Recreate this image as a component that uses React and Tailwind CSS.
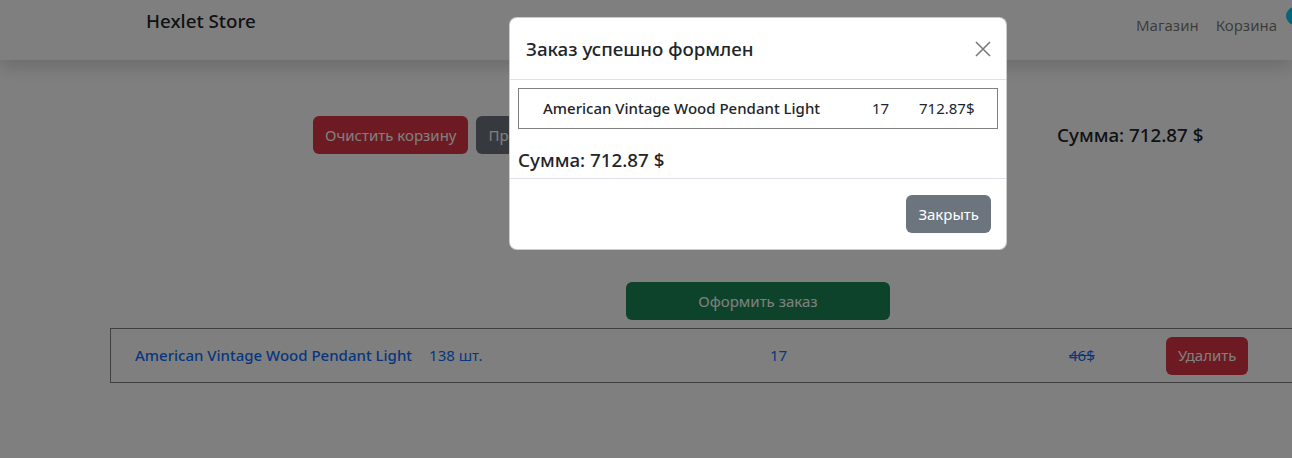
import React from "react";

// Cart page with the order-confirmation modal open over it
const item = { name: "American Vintage Wood Pendant Light", stock: 138, count: 17, price: 46, total: "712.87" };

const CloseIcon = () => (
    <svg width="16" height="16" viewBox="0 0 16 16" fill="none">
        <path d="M1 1L15 15M15 1L1 15" stroke="#7a7a7a" strokeWidth="1.6" />
    </svg>
);

const App = () => {
    return (
        <div className="relative h-[458px] w-[1292px] overflow-hidden bg-white font-['Noto_Sans',sans-serif] text-[15px] text-[#212529]">
            {/* Navbar */}
            <header className="relative z-10 flex h-[60px] items-start justify-between bg-white pl-[146px] pr-[15px] shadow-[0_8px_16px_rgba(0,0,0,0.15)]">
                <a className="mt-[6px] text-[18.75px] font-medium leading-[30px]">Hexlet Store</a>
                <nav className="mt-[13px] flex gap-[17px] leading-6 text-black/55">
                    <a>Магазин</a>
                    <a className="relative">
                        Корзина
                        <span className="absolute left-[calc(100%+9px)] top-[-6px] flex h-[18px] w-5 items-center justify-center rounded-full bg-[#0dcaf0] text-[11px] font-bold text-white">
                            1
                        </span>
                    </a>
                </nav>
            </header>

            <main>
                <div className="flex items-center pt-[56px]">
                    <div className="flex w-[1057px] gap-2 pl-[313px]">
                        <button className="h-[38px] rounded-md bg-[#dc3545] px-3 text-white">Очистить корзину</button>
                        <button className="h-[38px] rounded-md bg-[#6c757d] px-3 text-white">Продолжить покупки</button>
                    </div>
                    <div className="text-[18.75px] font-medium leading-[30px]">Сумма: {item.total} $</div>
                </div>

                <div className="mt-[128px] pl-[626px]">
                    <button className="h-[38px] w-[264px] rounded-md bg-[#198754] text-white">Оформить заказ</button>
                </div>

                <div className="ml-[110px] mt-2 flex h-[55px] w-[1220px] items-center border border-[#808080] pl-6 text-[#0d6efd]">
                    <div className="flex w-[635px] gap-[17px]">
                        <a className="font-medium">{item.name}</a>
                        <span>{item.stock} шт.</span>
                    </div>
                    <span className="w-[299px]">{item.count}</span>
                    <span className="w-[97px] line-through">{item.price}$</span>
                    <button className="h-[38px] rounded-md bg-[#dc3545] px-3 text-white">Удалить</button>
                </div>
            </main>

            {/* Backdrop */}
            <div className="absolute inset-0 z-20 bg-black/50" />

            {/* Modal */}
            <div className="absolute left-[509px] top-[17px] z-30 w-[498px] rounded-lg border border-black/20 bg-white">
                <div className="flex h-[62px] items-center justify-between border-b border-[#dee2e6] pl-4 pr-[15px]">
                    <h5 className="text-[18.75px] font-medium leading-[30px]">Заказ успешно формлен</h5>
                    <button><CloseIcon /></button>
                </div>
                <div className="px-2 pb-[3px] pt-2">
                    <div className="flex h-[41px] items-center border border-[#808080] pl-6">
                        <span className="w-[329px] font-medium">{item.name}</span>
                        <span className="w-[47px]">{item.count}</span>
                        <span>{item.total}$</span>
                    </div>
                    <div className="mt-4 text-[18.75px] font-medium leading-[30px]">Сумма: {item.total} $</div>
                </div>
                <div className="flex justify-end border-t border-[#dee2e6] px-[15px] pb-4 pt-4">
                    <button className="h-[38px] rounded-md bg-[#6c757d] px-3 text-white">Закрыть</button>
                </div>
            </div>
        </div>
    );
};

export default App;
